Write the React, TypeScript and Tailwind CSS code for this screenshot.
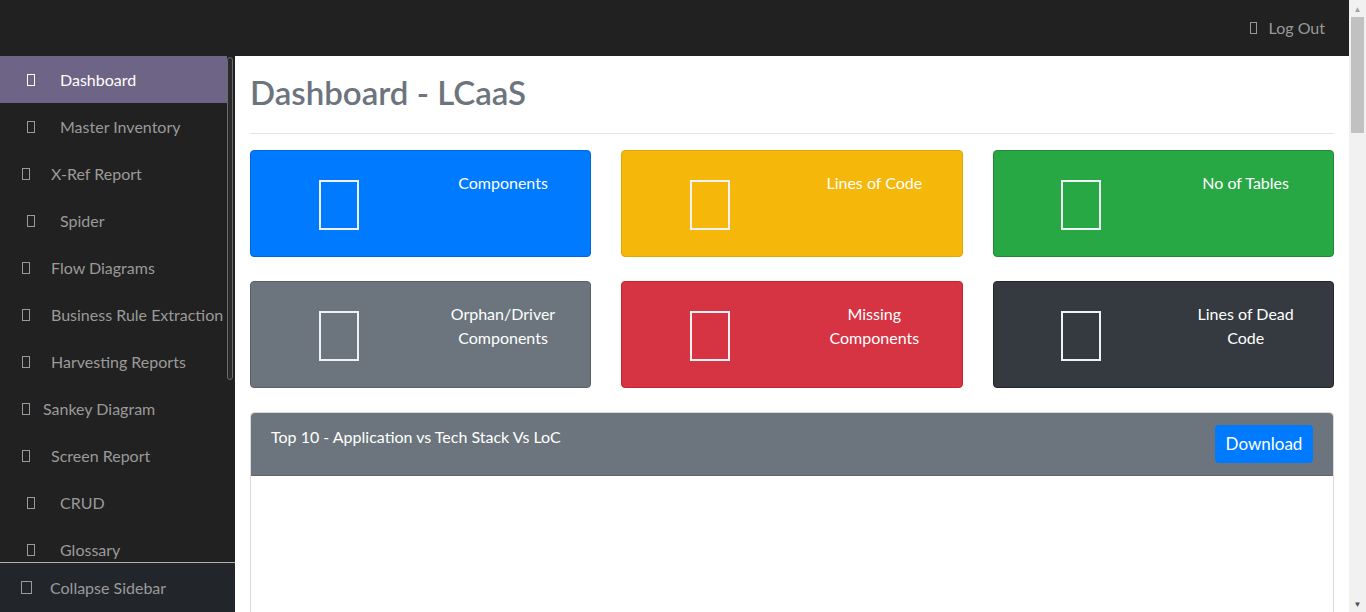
import React from 'react'

const navItems = [
  { label: 'Dashboard', pl: 'pl-[27px]', gap: 'gap-[25px]', active: true },
  { label: 'Master Inventory', pl: 'pl-[27px]', gap: 'gap-[25px]' },
  { label: 'X-Ref Report', pl: 'pl-[22px]', gap: 'gap-[21px]' },
  { label: 'Spider', pl: 'pl-[27px]', gap: 'gap-[25px]' },
  { label: 'Flow Diagrams', pl: 'pl-[22px]', gap: 'gap-[21px]' },
  { label: 'Business Rule Extraction', pl: 'pl-[22px]', gap: 'gap-[21px]' },
  { label: 'Harvesting Reports', pl: 'pl-[22px]', gap: 'gap-[21px]' },
  { label: 'Sankey Diagram', pl: 'pl-[22px]', gap: 'gap-[13px]' },
  { label: 'Screen Report', pl: 'pl-[22px]', gap: 'gap-[21px]' },
  { label: 'CRUD', pl: 'pl-[27px]', gap: 'gap-[25px]' },
  { label: 'Glossary', pl: 'pl-[27px]', gap: 'gap-[25px]' },
]

const cards = [
  { title: 'Components', bg: 'bg-[#007bff] border-[#0069d9]' },
  { title: 'Lines of Code', bg: 'bg-[#f5b70a] border-[#e0a800]' },
  { title: 'No of Tables', bg: 'bg-[#28a745] border-[#218838]' },
  { title: 'Orphan/Driver Components', bg: 'bg-[#6c757d] border-[#5a6268]' },
  { title: 'Missing Components', bg: 'bg-[#d63343] border-[#c82333]' },
  { title: 'Lines of Dead Code', bg: 'bg-[#343a40] border-[#23272b]' },
]

// missing-glyph box, like the unloaded icon font in the original
const Tofu = ({ className = 'w-[8px] h-[12px]' }: { className?: string }) => (
  <span className={`inline-block shrink-0 border border-current ${className}`}></span>
)

export default function App() {
  return (
    <div className="h-screen flex overflow-hidden bg-white font-['Lato',sans-serif]">
      <div className="flex-1 min-w-0 flex flex-col">
        <header className="h-14 shrink-0 bg-[#212121] flex items-center justify-end pr-6">
          <a className="flex items-center gap-3 text-[16px] text-[#999] cursor-pointer">
            <Tofu className="w-[7px] h-[12px]" />
            <span>Log Out</span>
          </a>
        </header>

        <div className="flex-1 min-h-0 flex">
          <aside className="w-[235px] shrink-0 bg-[#212121] flex flex-col">
            <div className="flex-1 min-h-0 flex">
              <nav className="flex-1 min-w-0 overflow-hidden">
                {navItems.map((item, i) => (
                  <div
                    key={i}
                    className={`h-[47px] flex items-center ${item.pl} ${item.gap} text-[16px] whitespace-nowrap ${item.active ? 'bg-[#6e6486] text-white' : 'text-[#9a9a9a]'}`}
                  >
                    <Tofu />
                    <span>{item.label}</span>
                  </div>
                ))}
              </nav>
              {/* sidebar scroll thumb */}
              <div className="w-[8px] shrink-0 pt-[1px] pr-[2px]">
                <div className="h-[323px] rounded-[3px] border border-[#6a6a6a] bg-[#2a2a2a]"></div>
              </div>
            </div>
            <div className="h-[50px] shrink-0 border-t border-[#b0b0b0] bg-[#22262b] flex items-center pl-[21px] gap-[18px] text-[16px] text-[#9a9a9a]">
              <Tofu className="w-[11px] h-[13px]" />
              <span>Collapse Sidebar</span>
            </div>
          </aside>

          <main className="flex-1 min-w-0 overflow-hidden px-[15px] pt-[17px]">
            <h2 className="text-[33px] leading-[38px] font-semibold text-[#6c757d]">Dashboard - LCaaS</h2>
            <hr className="mt-[22px] border-t border-[#e5e5e5]" />

            <div className="grid grid-cols-3 gap-x-[30px] gap-y-[24px] mt-[16px]">
              {cards.map((card, i) => (
                <div key={i} className={`h-[107px] rounded border grid grid-cols-2 text-white ${card.bg}`}>
                  <div className="flex justify-center pt-[29px] pl-[6px]">
                    <span className="inline-block w-[40px] h-[50px] border-2 border-[#eef2f6]"></span>
                  </div>
                  <div className="flex justify-center pt-[20px] pr-[5px]">
                    <p className="w-[118px] text-center text-[16px] leading-[24px]">{card.title}</p>
                  </div>
                </div>
              ))}
            </div>

            <section className="mt-[24px] rounded border border-[#dcdcdc]">
              <div className="bg-[#6c757d] rounded-t flex justify-between items-start px-5 py-3 border-b border-[#5f666c]">
                <h5 className="text-white text-[16px] leading-[24px]">Top 10 - Application vs Tech Stack Vs LoC</h5>
                <button className="w-[98px] h-[38px] rounded bg-[#007bff] text-white text-[17px]">Download</button>
              </div>
              <div className="h-[600px] bg-white"></div>
            </section>
          </main>
        </div>
      </div>

      {/* page scrollbar */}
      <div className="w-[17px] shrink-0 bg-[#f1f1f1] flex flex-col">
        <div className="h-[17px] flex items-center justify-center text-[#a3a3a3] text-[8px] leading-none">▲</div>
        <div className="px-[2px]">
          <div className="h-[116px] bg-[#c1c1c1]"></div>
        </div>
        <div className="flex-1"></div>
        <div className="h-[17px] flex items-center justify-center text-[#505050] text-[8px] leading-none">▼</div>
      </div>
    </div>
  )
}
